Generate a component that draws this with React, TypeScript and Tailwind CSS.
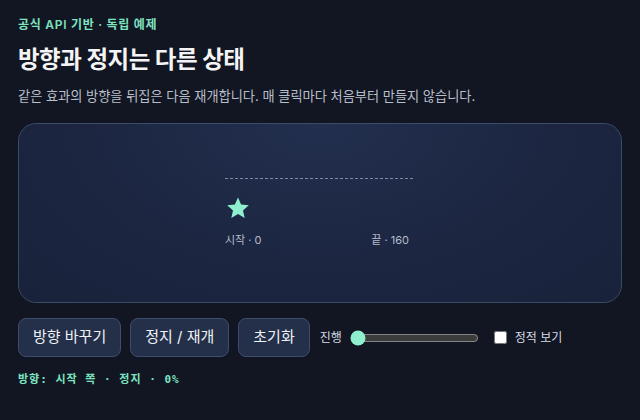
import { useState } from "react";

const SANS = "font-['Inter','Noto_Sans_CJK_KR',sans-serif]";
const MONO = "font-['DejaVu_Sans_Mono','Noto_Sans_CJK_KR',monospace]";

function Star() {
  return (
    <svg width="24" height="24" viewBox="0 0 24 24" aria-hidden="true">
      <path
        d="M12 1.5l3.1 7.1 7.7.7-5.8 5.1 1.7 7.6L12 18.1 5.3 22l1.7-7.6L1.2 9.3l7.7-.7z"
        fill="#8ef0cf"
      />
    </svg>
  );
}

export default function App() {
  const [progress, setProgress] = useState(0);
  const [still, setStill] = useState(false);

  const btn =
    "h-[39px] px-[14px] rounded-lg bg-[#243049] border border-[#3f4d6d] text-[15px] text-[#eef1f6]";

  return (
    <div className={`${SANS} min-h-[420px] w-full bg-[#111622] px-[18px] pt-[16px]`}>
      <p className="text-[12px] font-semibold tracking-[0.06em] text-[#7de3c0] leading-[18px]">
        공식 API 기반 · 독립 예제
      </p>

      <h1 className="mt-[11px] text-[23.5px] font-bold tracking-[-0.5px] text-[#f4f4f4] leading-[30px]">
        방향과 정지는 다른 상태
      </h1>

      <p className="mt-[12px] text-[13.2px] text-[#b9bfca] leading-[18px]">
        같은 효과의 방향을 뒤집은 다음 재개합니다. 매 클릭마다 처음부터 만들지 않습니다.
      </p>

      {/* Stage */}
      <div className="mt-[18px] h-[180px] rounded-[18px] border border-[#3b4a6a] bg-[radial-gradient(ellipse_at_50%_0%,#222f4e_0%,#1c2641_55%,#19223a_100%)] flex justify-center">
        <div className="w-[188px] ml-[-2px] pt-[54px]">
          <div className="border-t border-dashed border-[#7d8aa6]" />
          <div className="mt-[17px] ml-[1px] h-[24px]">
            <Star />
          </div>
          <div className="mt-[12px] flex justify-between pr-[4px] text-[11px] text-[#b4bccb]">
            <span>시작 · 0</span>
            <span>끝 · 160</span>
          </div>
        </div>
      </div>

      {/* Controls */}
      <div className="mt-[15px] flex items-center">
        <button className={btn}>방향 바꾸기</button>
        <button className={`${btn} ml-[9px]`}>정지 / 재개</button>
        <button className={`${btn} ml-[9px]`}>초기화</button>
        <label className="ml-[10px] flex items-center text-[12px] text-[#d6dae2]">
          진행
          <input
            type="range"
            min={0}
            max={100}
            value={progress}
            onChange={(e) => setProgress(Number(e.target.value))}
            className="ml-[8px] w-[129px] accent-[#8ef0cf]"
          />
        </label>
        <label className="ml-[15px] flex items-center text-[12px] text-[#d6dae2]">
          <input
            type="checkbox"
            checked={still}
            onChange={(e) => setStill(e.target.checked)}
            className="w-[13px] h-[13px] mr-[8px]"
          />
          정적 보기
        </label>
      </div>

      <p className={`${MONO} mt-[15px] text-[11px] font-semibold tracking-[1px] text-[#7de3c0] leading-[16px]`}>
        방향: 시작 쪽 · 정지 · {progress}%
      </p>
    </div>
  );
}
